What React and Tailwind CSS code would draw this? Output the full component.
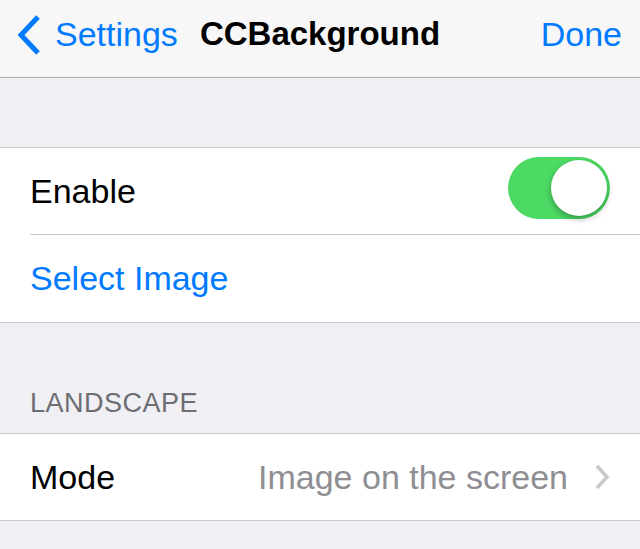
import React, { useState } from "react";

const font = { fontFamily: '"Liberation Sans", Arial, sans-serif' };

// iOS 7 style switch
const Switch = ({ on, onToggle }) => (
  <button
    onClick={onToggle}
    className={`relative w-[102px] h-[62px] rounded-full ${on ? "bg-[#4cd964]" : "bg-[#e5e5ea]"}`}
  >
    <span
      className={`absolute top-[3px] w-[56px] h-[56px] rounded-full bg-white shadow-[0_3px_6px_rgba(0,0,0,0.3)] ${on ? "left-[43px]" : "left-[3px]"}`}
    />
  </button>
);

export default function App() {
  const [enabled, setEnabled] = useState(true);

  return (
    <div className="w-[640px] h-[549px] bg-[#efeff4] overflow-hidden" style={font}>
      {/* Navigation bar */}
      <div className="h-[78px] bg-[#f7f7f7] border-b border-[#b2b2b2] flex items-center pb-[9px] relative">
        <div className="flex items-center pl-[16px] text-[#007aff] text-[34px]">
          <svg width="26" height="42" viewBox="0 0 26 42" className="mr-[13px] mt-[1px]">
            <path d="M22 3 L5 21 L22 39" fill="none" stroke="#007aff" strokeWidth="5" />
          </svg>
          <span>Settings</span>
        </div>
        <div className="absolute inset-0 pb-[9px] flex items-center justify-center text-[33px] font-bold text-black pointer-events-none">
          CCBackground
        </div>
        <div className="ml-auto pr-[18px] text-[#007aff] text-[34px]">Done</div>
      </div>

      <div className="h-[69px]" />

      {/* First group */}
      <div className="bg-white border-y border-[#c8c7cc]">
        <div className="h-[86px] flex items-center pl-[30px] pr-[30px]">
          <span className="text-[34px] text-black">Enable</span>
          <div className="ml-auto">
            <Switch on={enabled} onToggle={() => setEnabled(!enabled)} />
          </div>
        </div>
        <div className="ml-[30px] h-px bg-[#c8c7cc]" />
        <div className="h-[87px] flex items-center pl-[30px]">
          <span className="text-[34px] text-[#007aff]">Select Image</span>
        </div>
      </div>

      {/* Section header */}
      <div className="h-[110px] flex items-end pl-[30px] pb-[10px]">
        <span className="text-[27px] text-[#6d6d72] tracking-[0.5px]">LANDSCAPE</span>
      </div>

      <div className="bg-white border-y border-[#c8c7cc]">
        <div className="h-[86px] flex items-center pl-[30px] pr-[30px]">
          <span className="text-[34px] text-black">Mode</span>
          <span className="ml-auto text-[34px] text-[#8e8e93]">Image on the screen</span>
          <svg width="16" height="26" viewBox="0 0 16 26" className="ml-[26px]">
            <path d="M3 2 L13 13 L3 24" fill="none" stroke="#c7c7cc" strokeWidth="3.5" />
          </svg>
        </div>
      </div>
    </div>
  );
}
